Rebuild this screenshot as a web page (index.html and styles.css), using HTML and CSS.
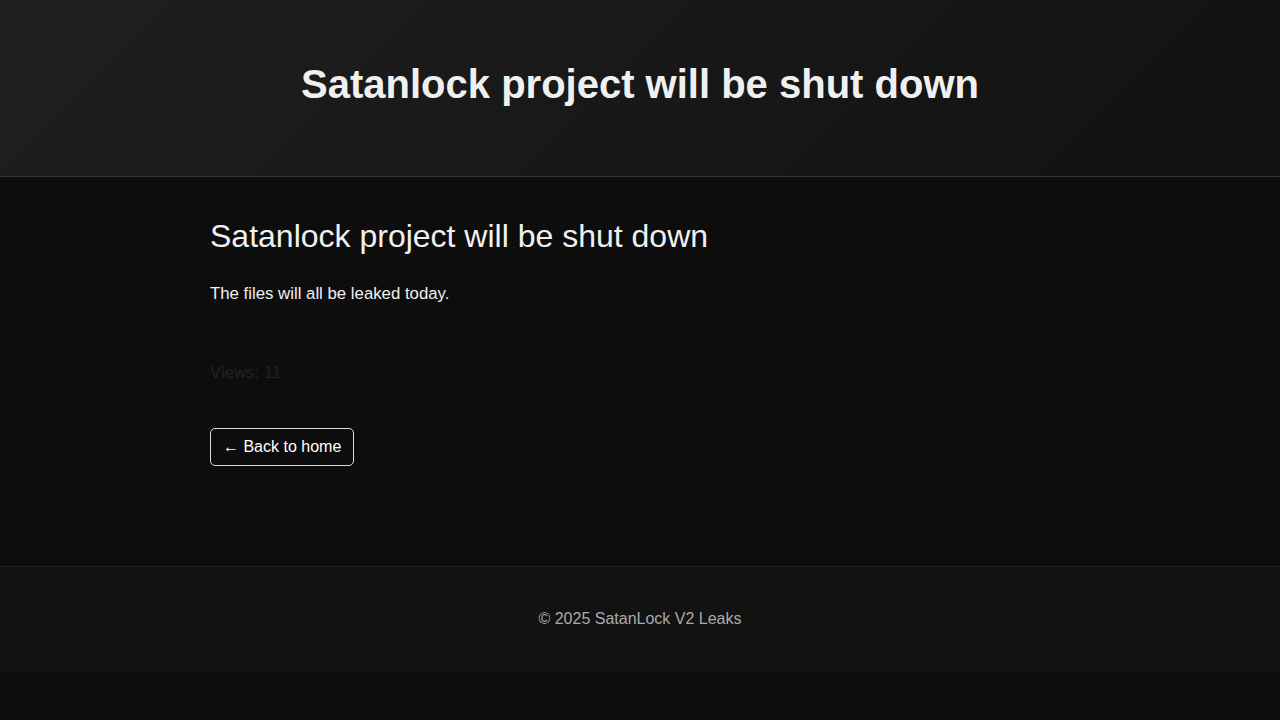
FILE: index.html
```html
<!DOCTYPE html>
<html lang="en">
<head>
    <meta charset="UTF-8">
    <meta name="viewport" content="width=device-width, initial-scale=1.0">
    <title>Satanlock project will be shut down</title>
    <link rel="stylesheet" href="styles.css">
</head>
<body>
    <header class="site-header">
        <h1 class="site-title">Satanlock project will be shut down</h1>
    </header>

    <main class="post">
        <h2 class="post-title">Satanlock project will be shut down</h2>
        <p class="post-body">The files will all be leaked today.</p>
        <div class="post-views">Views: 11</div>
        <a href="#" class="back-link">&larr; Back to home</a>
    </main>

    <footer class="site-footer">
        <p>&copy; 2025 SatanLock V2 Leaks</p>
    </footer>
</body>
</html>
```

FILE: styles.css
```css
body {
    font-family: "Liberation Sans", Arial, sans-serif;
    background-color: #0d0d0d;
    color: #f0f0f0;
    margin: 0;
}
.site-header {
    background: linear-gradient(135deg, #1f1f1f, #111111);
    border-bottom: 1px solid #333;
    padding: 61px 20px 69px;
    text-align: center;
}
.site-title {
    margin: 0;
    font-size: 40px;
    font-weight: bold;
    line-height: 46px;
}
.post {
    max-width: 860px;
    margin: 0 auto;
    padding: 41px 0 100px;
}
.post-title {
    margin: 0 0 29px;
    font-size: 32px;
    font-weight: normal;
    line-height: 37px;
}
.post-body {
    margin: 0 0 60px;
    font-size: 16.8px;
    line-height: 19px;
}
.post-views {
    color: #222;
    font-size: 16.8px;
    line-height: 19px;
    margin-bottom: 46px;
}
.back-link {
    display: inline-block;
    color: #fff;
    text-decoration: none;
    border: 1px solid #ddd;
    border-radius: 5px;
    padding: 9px 12px;
    font-size: 16px;
    line-height: 18px;
}
.site-footer {
    background-color: #121212;
    border-top: 1px solid #222;
    text-align: center;
    padding: 43px 0;
}
.site-footer p {
    margin: 0;
    color: #aaa;
    font-size: 16px;
    line-height: 18px;
}
```
